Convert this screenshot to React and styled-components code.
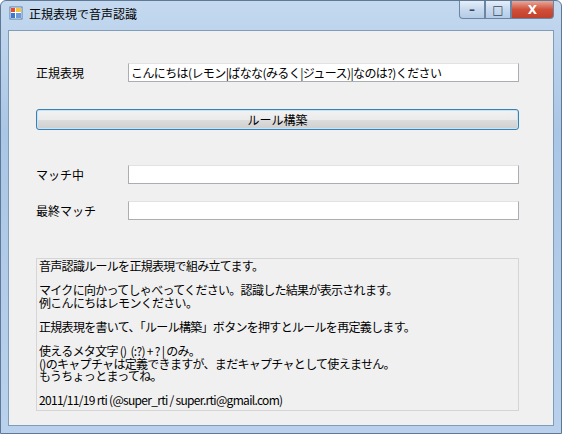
import React from 'react';
import styled, { createGlobalStyle } from 'styled-components';

const Global = createGlobalStyle`
  body { margin: 0; font-family: "Noto Sans CJK JP", "Noto Sans", sans-serif; }
`;

const Frame = styled.div`
  width: 562px;
  height: 434px;
  box-sizing: border-box;
  display: flex;
  flex-direction: column;
  background: linear-gradient(180deg, #c4d9ef 0%, #aac6e6 30%, #b9d1ec 100%);
  border: 1px solid #5f7896;
  border-radius: 6px 6px 0 0;
`;

const TitleBar = styled.div`
  height: 29px;
  display: flex;
  align-items: flex-start;
  padding: 0 7px 0 8px;
`;

const Title = styled.div`
  display: flex;
  align-items: center;
  gap: 6px;
  height: 24px;
  font-size: 12px;
  color: #000;
`;

const Controls = styled.div`
  margin-left: auto;
  display: flex;
`;

const Ctl = styled.div`
  width: ${p => (p.close ? 43 : 26)}px;
  height: 18px;
  box-sizing: border-box;
  border: 1px solid #6d85a2;
  border-top: none;
  border-radius: ${p => p.r || '0'};
  background: ${p => (p.close
    ? 'linear-gradient(180deg, #e8a89a 0%, #d0503a 50%, #c0402b 100%)'
    : 'linear-gradient(180deg, #e4eef9 0%, #c7d9ee 50%, #b4cbe6 100%)')};
  display: flex;
  align-items: center;
  justify-content: center;
  color: ${p => (p.close ? '#fff' : '#3a4a5c')};
  font: bold 12px "DejaVu Sans", sans-serif;
`;

const Client = styled.div`
  flex: 1;
  margin: 0 7px 7px 7px;
  background: #f0f0f0;
  border: 1px solid #7f9db9;
  padding: 32px 34px 0 27px;
  display: flex;
  flex-direction: column;
`;

const Row = styled.div`
  display: flex;
  align-items: center;
  margin-bottom: ${p => p.mb || 0}px;
`;

const Label = styled.div`
  width: ${p => p.w || 91}px;
  padding-left: ${p => p.pl || 0}px;
  box-sizing: border-box;
  font-size: 12px;
  color: #000;
`;

const Input = styled.div`
  flex: 1;
  height: 19px;
  box-sizing: border-box;
  background: #fff;
  border: 1px solid #abadb3;
  border-top-color: #e0e2e6;
  font-size: 12px;
  line-height: 17px;
  padding-left: 2px;
  letter-spacing: -0.6px;
  white-space: nowrap;
  overflow: hidden;
`;

const Button = styled.div`
  height: 21px;
  box-sizing: border-box;
  border: 1px solid #3c7fb1;
  border-radius: 3px;
  box-shadow: inset 0 0 0 1px #c4e5f6;
  background: linear-gradient(180deg, #f2f2f2 0%, #ebebeb 50%, #dddddd 51%, #cfcfcf 100%);
  font-size: 12px;
  display: flex;
  align-items: center;
  justify-content: center;
  margin-bottom: 35px;
`;

const Notes = styled.div`
  height: 153px;
  box-sizing: border-box;
  border: 1px solid #d5d5d5;
  background: #f0f0f0;
  padding: 1px 2px;
  font-size: 12px;
  line-height: 12.2px;
  letter-spacing: -0.7px;
  white-space: pre;
`;

const Icon = () => (
  <svg width="14" height="14" viewBox="0 0 14 14">
    <rect x="1" y="1" width="12" height="12" fill="#fff" stroke="#5b7ca8" />
    <rect x="2" y="2" width="4" height="4" fill="#e84a2a" />
    <rect x="7" y="2" width="5" height="4" fill="#f6c23a" />
    <rect x="2" y="7" width="4" height="5" fill="#3a78d4" />
    <rect x="7" y="7" width="5" height="5" fill="#6a9ad8" />
  </svg>
);

const notes = `音声認識ルールを正規表現で組み立てます。

マイクに向かってしゃべってください。認識した結果が表示されます。
例こんにちはレモンください。

正規表現を書いて、「ルール構築」ボタンを押すとルールを再定義します。

使えるメタ文字 ()  (:?) + ? | のみ。
()のキャプチャは定義できますが、まだキャプチャとして使えません。
もうちょっとまってね。

2011/11/19 rti (@super_rti / super.rti@gmail.com)`;

export default function App() {
  return (
    <>
      <Global />
      <Frame>
        <TitleBar>
          <Title><Icon />正規表現で音声認識</Title>
          <Controls>
            <Ctl r="0 0 0 4px">&#8211;</Ctl>
            <Ctl>&#9633;</Ctl>
            <Ctl close r="0 0 4px 0">X</Ctl>
          </Controls>
        </TitleBar>
        <Client>
          <Row mb={27}>
            <Label w={92}>正規表現</Label>
            <Input>こんにちは(レモン|ばなな(みるく|ジュース)|なのは?)ください</Input>
          </Row>
          <Button>ルール構築</Button>
          <Row mb={17}>
            <Label w={92}>マッチ中</Label>
            <Input />
          </Row>
          <Row mb={38}>
            <Label w={92}>最終マッチ</Label>
            <Input />
          </Row>
          <Notes>{notes}</Notes>
        </Client>
      </Frame>
    </>
  );
}
